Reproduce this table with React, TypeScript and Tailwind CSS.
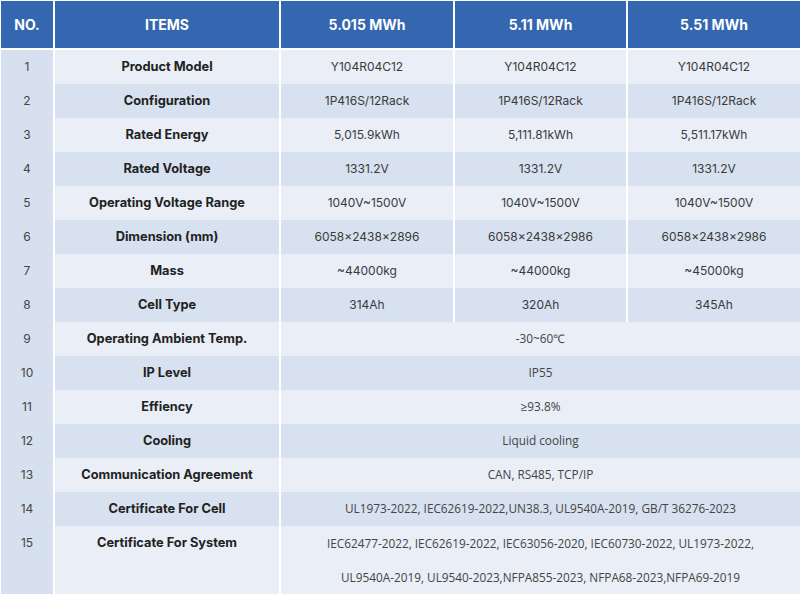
import React from "react";

const cols = "grid grid-cols-[52px_224px_172px_171px_172px] gap-x-[2px]";

const rows: { label: string; values: string[] }[] = [
  { label: "Product Model", values: ["Y104R04C12", "Y104R04C12", "Y104R04C12"] },
  { label: "Configuration", values: ["1P416S/12Rack", "1P416S/12Rack", "1P416S/12Rack"] },
  { label: "Rated Energy", values: ["5,015.9kWh", "5,111.81kWh", "5,511.17kWh"] },
  { label: "Rated Voltage", values: ["1331.2V", "1331.2V", "1331.2V"] },
  { label: "Operating Voltage Range", values: ["1040V~1500V", "1040V~1500V", "1040V~1500V"] },
  { label: "Dimension (mm)", values: ["6058×2438×2896", "6058x2438x2986", "6058x2438x2986"] },
  { label: "Mass", values: ["~44000kg", "~44000kg", "~45000kg"] },
  { label: "Cell Type", values: ["314Ah", "320Ah", "345Ah"] },
];

const spanRows: { label: string; value: string }[] = [
  { label: "Operating Ambient Temp.", value: "-30~60℃" },
  { label: "IP Level", value: "IP55" },
  { label: "Effiency", value: "≥93.8%" },
  { label: "Cooling", value: "Liquid cooling" },
  { label: "Communication Agreement", value: "CAN, RS485, TCP/IP" },
  {
    label: "Certificate For Cell",
    value: "UL1973-2022, IEC62619-2022,UN38.3, UL9540A-2019, GB/T 36276-2023",
  },
];

const App = () => {
  const stripe = (i: number) => (i % 2 === 0 ? "bg-[#e9eef7]" : "bg-[#d7e1ef]");

  return (
    <div className="w-[800px] h-[594px] bg-white pl-[1px] pt-[1px] font-['Inter',sans-serif] text-[12px] text-[#3a3a3a]">
      {/* header */}
      <div className={`${cols} h-[47px] mb-[2px] text-white font-bold text-[14px]`}>
        {["NO.", "ITEMS", "5.015 MWh", "5.11 MWh", "5.51 MWh"].map((h) => (
          <div key={h} className="bg-[#3566b0] flex items-center justify-center">
            {h}
          </div>
        ))}
      </div>

      {rows.map((row, i) => (
        <div key={row.label} className={`${cols} h-[34px]`}>
          <div className="bg-[#d6e0ee] flex items-center justify-center text-[#444]">{i + 1}</div>
          <div className={`${stripe(i)} flex items-center justify-center font-bold text-[12.8px] text-[#222]`}>
            {row.label}
          </div>
          {row.values.map((v, j) => (
            <div key={j} className={`${stripe(i)} flex items-center justify-center`}>
              {v}
            </div>
          ))}
        </div>
      ))}

      {spanRows.map((row, k) => {
        const i = k + rows.length;
        return (
          <div key={row.label} className={`${cols} h-[34px]`}>
            <div className="bg-[#d6e0ee] flex items-center justify-center text-[#444]">{i + 1}</div>
            <div className={`${stripe(i)} flex items-center justify-center font-bold text-[12.8px] text-[#222]`}>
              {row.label}
            </div>
            <div
              className={`${stripe(i)} col-span-3 flex items-center justify-center font-['Open_Sans',sans-serif] text-[11.8px] text-[#444]`}
            >
              {row.value}
            </div>
          </div>
        );
      })}

      {/* last row, two lines */}
      <div className={`${cols} h-[67px] leading-[34px]`}>
        <div className="bg-[#d6e0ee] text-center text-[#444]">15</div>
        <div className="bg-[#e9eef7] text-center font-bold text-[12.8px] text-[#222]">Certificate For System</div>
        <div className="bg-[#e9eef7] col-span-3 text-center font-['Open_Sans',sans-serif] text-[11.8px] text-[#444]">
          IEC62477-2022, IEC62619-2022, IEC63056-2020, IEC60730-2022, UL1973-2022,
          <br />
          UL9540A-2019, UL9540-2023,NFPA855-2023, NFPA68-2023,NFPA69-2019
        </div>
      </div>
    </div>
  );
};

export default App;
